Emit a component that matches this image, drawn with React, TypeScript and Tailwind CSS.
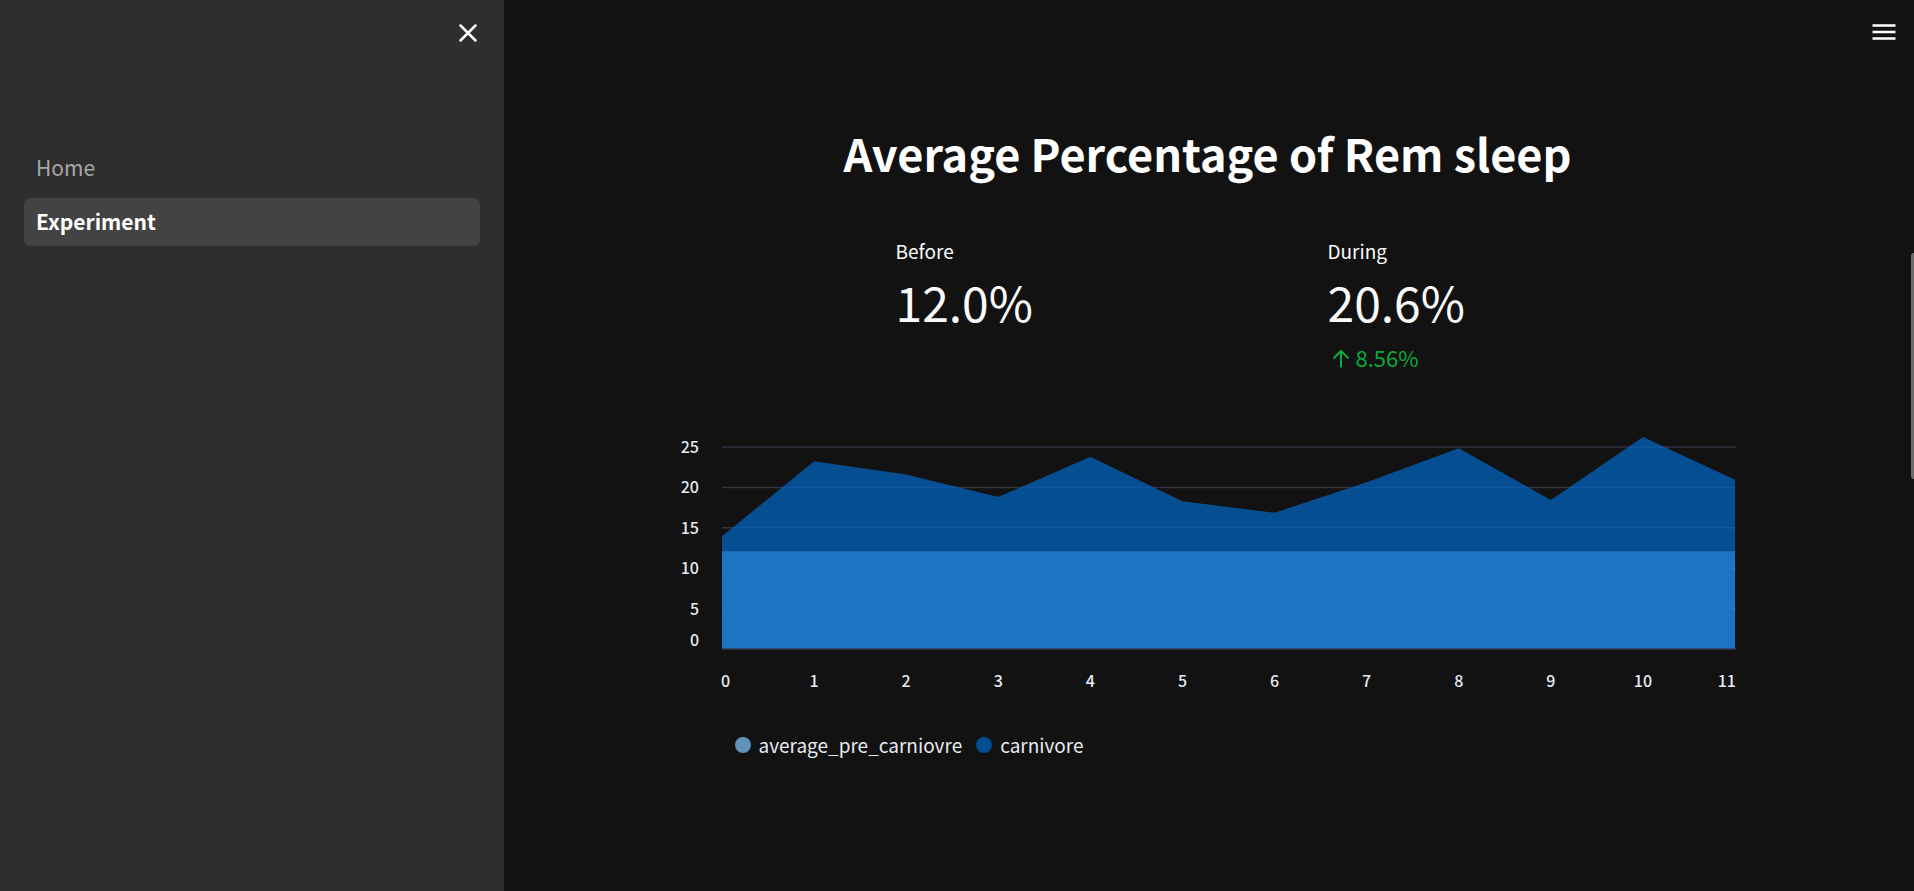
const AVERAGE_BEFORE = 12.1;
const CARNIVORE = [13.95, 23.25, 21.6, 18.8, 23.8, 18.3, 16.85, 20.65, 24.85, 18.45, 26.25, 20.95];

const PLOT = { left: 42, right: 1055, top: 21, bottom: 223 };
const Y_TICKS = [25, 20, 15, 10, 5, 0];

const xAt = (i: number) =>
  PLOT.left + (i * (PLOT.right - PLOT.left)) / (CARNIVORE.length - 1);
const yAt = (v: number) => PLOT.bottom - (v * (PLOT.bottom - PLOT.top)) / 25;

const areaPath = (values: number[]) =>
  `M${xAt(0)},${PLOT.bottom} ` +
  values.map((v, i) => `L${xAt(i)},${yAt(v)}`).join(" ") +
  ` L${xAt(values.length - 1)},${PLOT.bottom} Z`;

// The first and last labels are kept inside the plot's width.
function labelProps(i: number) {
  if (i === 0) return { x: xAt(i) - 1, textAnchor: "start" as const };
  if (i === CARNIVORE.length - 1) return { x: xAt(i) + 1, textAnchor: "end" as const };
  return { x: xAt(i), textAnchor: "middle" as const };
}

function SleepChart() {
  return (
    <figure>
      <svg viewBox="0 0 1056 270" className="block h-auto w-full" role="img" aria-label="Rem sleep percentage by night">
        {Y_TICKS.map((t) => (
          <line key={t} x1={PLOT.left} x2={PLOT.right + 1} y1={yAt(t)} y2={yAt(t)} stroke="#31333f" strokeWidth="1.5" />
        ))}
        <path d={areaPath(CARNIVORE.map(() => AVERAGE_BEFORE))} fill="#83c9ff" fillOpacity="0.7" />
        <path d={areaPath(CARNIVORE)} fill="#0068c9" fillOpacity="0.7" />
        <line x1={PLOT.left} x2={PLOT.right} y1={PLOT.bottom} y2={PLOT.bottom} stroke="#31333f" strokeOpacity="0.8" strokeWidth="1.5" />
        <g fill="#e6eaf1" fontSize="16" fontWeight="500">
          {Y_TICKS.map((t) => (
            <text key={t} x="19" y={t === 0 ? yAt(t) - 3 : yAt(t) + 6} textAnchor="end">
              {t}
            </text>
          ))}
          {CARNIVORE.map((_, i) => (
            <text key={i} y={PLOT.bottom + 38} {...labelProps(i)}>
              {i}
            </text>
          ))}
        </g>
      </svg>
      <figcaption className="mt-[35px] flex items-center gap-3.5 pl-[55px] text-[19px] leading-7 text-[#e6eaf1]">
        <span className="flex items-center gap-2">
          <span className="size-4 rounded-full bg-[#6192b8]" />
          average_pre_carniovre
        </span>
        <span className="flex items-center gap-2">
          <span className="size-4 rounded-full bg-[#054e92]" />
          carnivore
        </span>
      </figcaption>
    </figure>
  );
}

function Metric({ label, value, delta, className }: { label: string; value: string; delta?: string; className: string }) {
  return (
    <div className={className}>
      <p className="text-[19px] leading-8">{label}</p>
      <p className="text-5xl leading-[68px]">{value}</p>
      {delta && (
        <p className="mt-1 flex items-center text-[22px] leading-9 text-[#09ab3b]">
          <svg viewBox="0 0 24 24" className="size-6" fill="none" stroke="currentColor" strokeWidth="2" aria-hidden="true">
            <path d="M13 22.5V6M5.5 13.5 13 6 20.5 13.5" />
          </svg>
          <span className="ml-1">{delta}</span>
        </p>
      )}
    </div>
  );
}

export default function App() {
  return (
    <div className="flex min-h-screen bg-[#121212] font-['Noto_Sans_CJK_JP',sans-serif] text-[#fafafa]">
      <aside className="w-[504px] shrink-0 bg-[#2e2e2e] px-6">
        <div className="flex h-[66px] items-center justify-end">
          <button type="button" aria-label="Close sidebar" className="-mr-1 grid size-8 place-items-center">
            <svg viewBox="0 0 24 24" className="size-6" fill="none" stroke="white" strokeWidth="2.5" strokeLinecap="round">
              <path d="M4.5 4.5 19.5 19.5M19.5 4.5 4.5 19.5" />
            </svg>
          </button>
        </div>
        <nav className="flex flex-col gap-1.5 pt-[78px] text-[21px] leading-[46px]">
          <a href="#home" className="rounded-md px-3 pb-0.5 text-[#a8a8a8]">Home</a>
          <a href="#experiment" aria-current="page" className="rounded-md bg-[#434343] px-3 pb-0.5 font-bold text-white">Experiment</a>
        </nav>
      </aside>

      <div className="flex min-w-0 flex-1 flex-col">
        <header className="flex h-16 items-center justify-end pr-[11px]">
          <button type="button" aria-label="Open menu" className="grid size-8 place-items-center">
            <svg viewBox="0 0 24 24" className="size-6" fill="none" stroke="white" strokeWidth="2.5">
              <path d="M0.5 5.5H23.5M0.5 12H23.5M0.5 18.5H23.5" />
            </svg>
          </button>
        </header>
        <main className="mx-auto w-full max-w-[1056px] pt-[53px]">
          <h1 className="text-center text-[45px] leading-[72px] font-bold text-white">Average Percentage of Rem sleep</h1>
          <section className="mt-[46px] grid grid-cols-5 gap-6">
            <Metric className="col-start-2" label="Before" value="12.0%" />
            <Metric className="col-start-4" label="During" value="20.6%" delta="8.56%" />
          </section>
          <div className="mt-[51px]">
            <SleepChart />
          </div>
        </main>
      </div>

      <div className="w-[3px] shrink-0 pt-[253px]">
        <div className="h-[226px] rounded-l-sm bg-[#6b6b6b]" />
      </div>
    </div>
  );
}
